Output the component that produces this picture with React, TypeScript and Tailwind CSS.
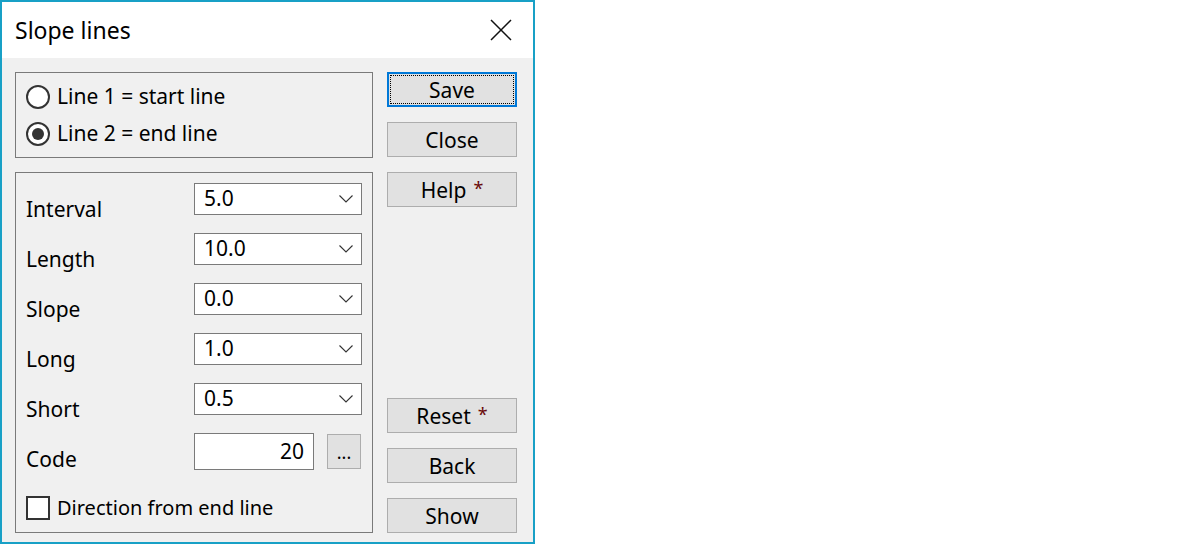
import React from "react";

const font = { fontFamily: '"Noto Sans", "Open Sans", sans-serif' };

function Chevron() {
  return (
    <svg width="14" height="8" viewBox="0 0 14 8" className="block">
      <path d="M0.5 0.5 L7 7 L13.5 0.5" fill="none" stroke="#333" strokeWidth="1.1" />
    </svg>
  );
}

function Combo({ value }: { value: string }) {
  return (
    <div className="w-[168px] h-[32px] bg-white border border-[#7a7a7a] flex items-center justify-between pl-[9px] pr-[8px]">
      <span className="text-[21px] leading-none text-black -mt-[1px]">{value}</span>
      <Chevron />
    </div>
  );
}

function Btn({ children, focused }: { children: React.ReactNode; focused?: boolean }) {
  if (focused) {
    return (
      <div className="w-[130px] h-[35px] bg-[#e1e1e1] border-2 border-[#0078d7] p-[1px] flex">
        <div className="flex-1 border border-dotted border-black flex items-center justify-center text-[21px] leading-none text-black pt-[1px]">
          {children}
        </div>
      </div>
    );
  }
  return (
    <div className="w-[130px] h-[35px] bg-[#e1e1e1] border border-[#adadad] flex items-center justify-center text-[21px] leading-none text-black pt-[1px]">
      {children}
    </div>
  );
}

function Star() {
  return <span className="text-[#6a0a0a] ml-[7px] text-[18px] self-start mt-[5px]">*</span>;
}

export default function App() {
  const rows = [
    ["Interval", "5.0"],
    ["Length", "10.0"],
    ["Slope", "0.0"],
    ["Long", "1.0"],
    ["Short", "0.5"],
  ];
  return (
    <div className="w-[1200px] h-[544px] bg-white" style={font}>
      <div className="w-[535px] h-[544px] border-2 border-[#18a0c6] flex flex-col">
        <div className="h-[56px] bg-white flex items-center justify-between pl-[13px] pr-[21px] shrink-0">
          <span className="text-[23px] text-black">Slope lines</span>
          <svg width="22" height="22" viewBox="0 0 22 22">
            <path d="M1 1 L21 21 M21 1 L1 21" stroke="#111" strokeWidth="1.5" />
          </svg>
        </div>
        <div className="flex-1 bg-[#f0f0f0] flex pl-[13px] pt-[14px] pb-[9px] gap-[14px]">
          <div className="w-[358px] flex flex-col gap-[14px]">
            <div className="h-[86px] border border-[#7a7a7a] pl-[10px] pt-[12px] flex flex-col gap-[13px]">
              <div className="flex items-center h-[24px] gap-[7px]">
                <div className="w-[24px] h-[24px] rounded-full border-2 border-[#333] bg-white" />
                <span className="text-[21px] text-black">Line 1 = start line</span>
              </div>
              <div className="flex items-center h-[24px] gap-[7px]">
                <div className="w-[24px] h-[24px] rounded-full border-2 border-[#333] bg-white flex items-center justify-center">
                  <div className="w-[12px] h-[12px] rounded-full bg-[#333]" />
                </div>
                <span className="text-[21px] text-black">Line 2 = end line</span>
              </div>
            </div>
            <div className="flex-1 border border-[#7a7a7a] pl-[10px] pr-[9px] pt-[10px] flex flex-col">
              {rows.map(([label, v]) => (
                <div key={label} className="flex h-[50px]">
                  <div className="w-[168px] pt-[12px] text-[21px] leading-[28px] text-black">{label}</div>
                  <Combo value={v} />
                </div>
              ))}
              <div className="flex h-[63px]">
                <div className="w-[168px] pt-[12px] text-[21px] leading-[28px] text-black">Code</div>
                <div className="w-[120px] h-[37px] bg-white border border-[#7a7a7a] flex items-center justify-end pr-[9px] text-[21px] leading-none text-black">
                  20
                </div>
                <div className="ml-[13px] mt-[1px] w-[34px] h-[35px] bg-[#e1e1e1] border border-[#adadad] flex items-center justify-center text-[18px] leading-none text-black">
                  ...
                </div>
              </div>
              <div className="flex items-center h-[24px] gap-[7px]">
                <div className="w-[24px] h-[24px] border-2 border-[#333] bg-white" />
                <span className="text-[20px] text-black">Direction from end line</span>
              </div>
            </div>
          </div>
          <div className="w-[130px] flex flex-col justify-between">
            <div className="flex flex-col gap-[15px]">
              <Btn focused>Save</Btn>
              <Btn>Close</Btn>
              <Btn>
                Help<Star />
              </Btn>
            </div>
            <div className="flex flex-col gap-[15px]">
              <Btn>
                Reset<Star />
              </Btn>
              <Btn>Back</Btn>
              <Btn>Show</Btn>
            </div>
          </div>
        </div>
      </div>
    </div>
  );
}
